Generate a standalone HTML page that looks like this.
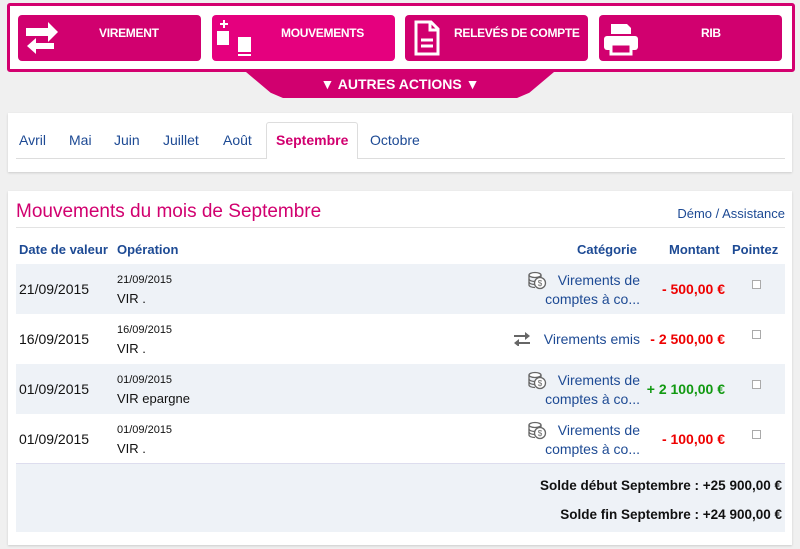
<!DOCTYPE html>
<html><head><meta charset="utf-8"><style>
*{box-sizing:border-box;margin:0;padding:0}
body{width:800px;height:549px;background:#f0f0f0;font-family:"Liberation Sans",sans-serif;position:relative;overflow:hidden}
.abs{position:absolute}
.top{left:7px;top:3px;width:788px;height:69px;border:3px solid #d3006f;border-radius:3px;background:#fff}
.btn{position:absolute;top:15px;height:46px;background:#d1006f;border-radius:4px;color:#fff;font-weight:bold;font-size:12px;white-space:nowrap}
.btn span{position:absolute;top:11px;letter-spacing:-0.3px}
.btn svg{position:absolute}
.aa{left:246px;top:72px;width:308px;height:26px;background:#d1006f;clip-path:polygon(0 0,100% 0,92% 80%,88% 100%,12% 100%,8% 80%);color:#fff;font-weight:bold;font-size:14px;text-align:center;line-height:25px}
.card{background:#fff;box-shadow:0 1px 2px #ccc}
.tabs a{position:absolute;top:132px;font-size:14px;color:#1d4a94;text-decoration:none}
.blue{color:#1d4a94}
.row{position:absolute;left:16px;width:769px;height:50px}
.g{background:#eef2f7}
.row .d{position:absolute;left:3px;top:17px;font-size:14px;color:#111}
.row .o1{position:absolute;left:101px;top:10px;font-size:11px;color:#111}
.row .o2{position:absolute;left:101px;top:27px;font-size:13px;color:#111}
.row .c{position:absolute;right:145px;top:7px;font-size:14px;color:#1d4a94;text-align:right;line-height:19px}
.row .m{position:absolute;right:60px;top:17px;font-size:14px;font-weight:bold}
.row .cb{position:absolute;left:736px;top:16px;width:9px;height:9px;border:1px solid #aaa;background:#fff}
.row .ic{position:absolute;left:511px;top:7px}
.red{color:#e00}.grn{color:#119911}
</style></head><body>
<div class="abs top"></div>
<div class="btn" style="left:18px;width:183px"><svg style="left:6px;top:6px" width="36" height="34" viewBox="0 0 36 34"><path d="M2 7h22V1l10 10-10 10v-6H2z" fill="#fff"/><path d="M30 22H12v-5l-9 8 9 8v-5h18z" fill="#fff"/></svg><span style="left:81px">VIREMENT</span></div>
<div class="btn" style="left:212px;width:183px;background:#e5007e"><svg style="left:4px;top:5px" width="40" height="40" viewBox="0 0 40 40"><path d="M4 3h3v-3h2v3h3v2h-3v3h-2v-3h-3z" fill="#fff"/><rect x="1" y="11" width="12" height="14" fill="#fff"/><rect x="22" y="17" width="13" height="15" fill="#fff"/><rect x="22" y="34" width="13" height="2" fill="#fff"/></svg><span style="left:69px">MOUVEMENTS</span></div>
<div class="btn" style="left:405px;width:183px"><svg style="left:9px;top:5px" width="26" height="36" viewBox="0 0 26 36"><path d="M2 2h15l7 7v25H2z" fill="none" stroke="#fff" stroke-width="3"/><path d="M16 2v8h8" fill="none" stroke="#fff" stroke-width="3"/><path d="M7 20h12M7 26h12" stroke="#fff" stroke-width="3"/></svg><span style="left:49px">RELEVÉS DE COMPTE</span></div>
<div class="btn" style="left:599px;width:183px"><svg style="left:4px;top:7px" width="36" height="34" viewBox="0 0 36 34"><path d="M8 2h16l4 4v6H8z" fill="#fff"/><rect x="1" y="14" width="34" height="14" rx="3" fill="#fff"/><rect x="8" y="22" width="20" height="10" fill="#d1006f" stroke="#fff" stroke-width="3"/></svg><span style="left:102px">RIB</span></div>
<div class="abs aa">▼ AUTRES ACTIONS ▼</div>

<div class="abs card" style="left:8px;top:113px;width:784px;height:59px"></div>
<div class="abs" style="left:16px;top:158px;width:769px;height:1px;background:#ddd"></div>
<div class="abs" style="left:266px;top:122px;width:92px;height:37px;border:1px solid #ddd;border-bottom:none;background:#fff;border-radius:3px 3px 0 0"></div>
<div class="tabs"><a style="left:19px">Avril</a><a style="left:69px">Mai</a><a style="left:114px">Juin</a><a style="left:163px">Juillet</a><a style="left:223px">Août</a><a style="left:276px;color:#d1006f;font-weight:bold">Septembre</a><a style="left:370px">Octobre</a></div>

<div class="abs card" style="left:8px;top:191px;width:784px;height:354px"></div>
<div class="abs" style="left:16px;top:201px;font-size:19px;color:#d1006f">Mouvements du mois de Septembre</div>
<div class="abs blue" style="right:15px;top:206px;font-size:13px">Démo / Assistance</div>
<div class="abs" style="left:16px;top:227px;width:769px;height:1px;background:#e3e3e3"></div>
<div class="abs blue" style="left:19px;top:242px;font-size:13px;font-weight:bold">Date de valeur</div>
<div class="abs blue" style="left:117px;top:242px;font-size:13px;font-weight:bold">Opération</div>
<div class="abs blue" style="left:577px;top:242px;font-size:13px;font-weight:bold">Catégorie</div>
<div class="abs blue" style="left:669px;top:242px;font-size:13px;font-weight:bold">Montant</div>
<div class="abs blue" style="left:732px;top:242px;font-size:13px;font-weight:bold">Pointez</div>

<svg width="0" height="0" style="position:absolute"><defs><g id="coin"><ellipse cx="8" cy="4" rx="6" ry="2.5" fill="#fff" stroke="#666" stroke-width="1.3"/><path d="M2 4v10c0 1.5 3 2.5 6 2.5M14 4v4" fill="none" stroke="#666" stroke-width="1.3"/><path d="M2 8c0 1.5 3 2.5 6 2.5M2 11c0 1.5 3 2.5 6 2.5" fill="none" stroke="#666" stroke-width="1.3"/><circle cx="13" cy="12" r="5.5" fill="#fff" stroke="#666" stroke-width="1.3"/><text x="13" y="15" font-size="8" text-anchor="middle" fill="#666" font-family="Liberation Sans">$</text></g></defs></svg>

<div class="row g" style="top:264px"><div class="d">21/09/2015</div><div class="o1">21/09/2015</div><div class="o2">VIR .</div><div class="c">Virements de<br>comptes à co...</div><div class="m red">- 500,00 €</div><div class="cb"></div><svg class="ic" width="20" height="19"><use href="#coin"/></svg></div>
<div class="row" style="top:314px"><div class="d">16/09/2015</div><div class="o1">16/09/2015</div><div class="o2">VIR .</div><div class="c" style="top:16px">Virements emis</div><div class="m red">- 2 500,00 €</div><div class="cb"></div><svg class="abs" style="left:497px;top:18px" width="18" height="14" viewBox="0 0 18 14"><path d="M1 3h11V0l5 4-5 4V5H1z" fill="#666"/><path d="M17 10H6V7l-5 4 5 4v-3h11z" fill="#666"/></svg></div>
<div class="row g" style="top:364px"><div class="d">01/09/2015</div><div class="o1">01/09/2015</div><div class="o2">VIR epargne</div><div class="c">Virements de<br>comptes à co...</div><div class="m grn">+ 2 100,00 €</div><div class="cb"></div><svg class="ic" width="20" height="19"><use href="#coin"/></svg></div>
<div class="row" style="top:414px"><div class="d">01/09/2015</div><div class="o1">01/09/2015</div><div class="o2">VIR .</div><div class="c">Virements de<br>comptes à co...</div><div class="m red">- 100,00 €</div><div class="cb"></div><svg class="ic" width="20" height="19"><use href="#coin"/></svg></div>
<div class="abs g" style="left:16px;top:463px;width:769px;height:69px;border-top:1px solid #dde"></div>
<div class="abs" style="right:18px;top:478px;font-size:13.5px;font-weight:bold;color:#111">Solde début Septembre : +25 900,00 €</div>
<div class="abs" style="right:18px;top:507px;font-size:13.5px;font-weight:bold;color:#111">Solde fin Septembre : +24 900,00 €</div>
</body></html>
